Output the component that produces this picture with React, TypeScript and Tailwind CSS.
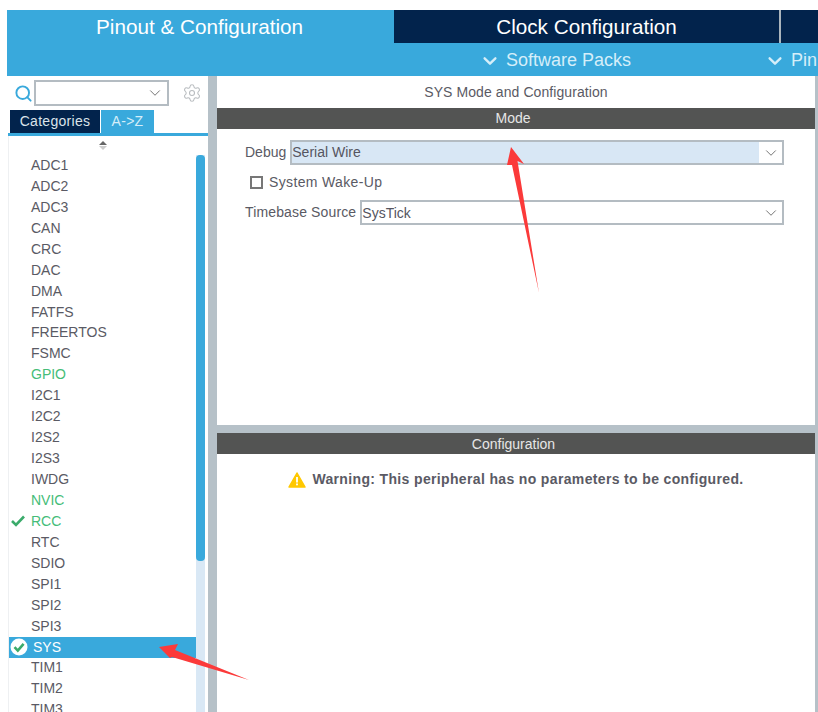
import { ChevronDown, Search, Settings } from "lucide-react";

const peripherals = [
  "ADC1", "ADC2", "ADC3", "CAN", "CRC", "DAC", "DMA", "FATFS", "FREERTOS", "FSMC", "GPIO",
  "I2C1", "I2C2", "I2S2", "I2S3", "IWDG", "NVIC", "RCC", "RTC", "SDIO", "SPI1", "SPI2", "SPI3",
  "SYS", "TIM1", "TIM2",
];

function Select({ value, active }: { value: string; active?: boolean }) {
  return (
    <div className="flex-1 h-[25px] border-2 border-[#b4bcc2] flex items-center bg-white">
      <div className={`flex-1 h-full flex items-center text-[14px] text-[#55555f] ${active ? "bg-[#d8e7f5]" : "pt-px"}`}>
        {value}
      </div>
      <div className="w-[23px] flex justify-center">
        <ChevronDown size={18} strokeWidth={1.2} className="text-[#666]" />
      </div>
    </div>
  );
}

function Row({ name }: { name: string }) {
  if (name === "SYS") {
    return (
      <div className="h-[20.95px] bg-[#39a9dc] flex items-center text-white">
        <svg width="18" height="18" viewBox="0 0 18 18" className="ml-[1px] mr-[5px]">
          <circle cx="9" cy="9" r="8.5" fill="#fff" />
          <path d="M4.5 9.2 L7.8 12.6 L13.6 5.8" fill="none" stroke="#3bab6b" strokeWidth="2.6" />
        </svg>
        {name}
      </div>
    );
  }
  const green = name === "GPIO" || name === "NVIC" || name === "RCC";
  return (
    <div className={`h-[20.95px] flex items-center pl-[22px] relative ${green ? "text-[#45bd78]" : "text-[#5a5a64]"}`}>
      {name === "RCC" && (
        <svg width="14" height="12" viewBox="0 0 14 12" className="absolute left-[2px] top-[4px]">
          <path d="M1 6 L5 10 L13 1.5" fill="none" stroke="#3bab6b" strokeWidth="2.6" />
        </svg>
      )}
      {name}
    </div>
  );
}

export default function App() {
  return (
    <div className="w-[818px] h-[712px] overflow-hidden bg-white flex flex-col pt-[10px] font-['Liberation_Sans',Arial,sans-serif] text-[14px] relative">
      {/* top tabs */}
      <div className="ml-[7px] bg-[#39a9dc] text-white shrink-0">
        <div className="flex h-[33px] text-[20.7px] leading-[33px]">
          <div className="w-[387px] text-center pr-[2px]">Pinout &amp; Configuration</div>
          <div className="w-[385px] bg-[#02234c] text-center">Clock Configuration</div>
          <div className="w-[2px] bg-[#aab4bc]" />
          <div className="flex-1 bg-[#02234c]" />
        </div>
        <div className="flex h-[33px] items-center pt-[2px] text-[18px] text-[#d5eef9] whitespace-nowrap overflow-hidden">
          <div className="ml-[474px] flex items-center gap-[7px]">
            <ChevronDown size={18} strokeWidth={2.6} className="scale-[1.2]" />
            Software Packs
          </div>
          <div className="ml-[135px] flex items-center gap-[7px]">
            <ChevronDown size={18} strokeWidth={2.6} className="scale-[1.2]" />
            Pin
          </div>
        </div>
      </div>

      <div className="flex-1 flex min-h-0">
        {/* left column */}
        <div className="w-[208px] shrink-0 flex flex-col pl-[8px]">
          <div className="h-[34px] flex items-center shrink-0">
            <Search size={19} strokeWidth={2.4} className="text-[#39a9dc] ml-[6px]" />
            <div className="w-[135px] h-[26px] ml-[1px] border-2 border-[#b4bcc2] flex items-center justify-end pr-[3px]">
              <ChevronDown size={18} strokeWidth={1.2} className="text-[#666]" />
            </div>
            <Settings size={20} strokeWidth={1.3} className="text-[#b9bdc0] ml-[13px]" />
          </div>
          <div className="flex pl-[2px] h-[23px] shrink-0 text-[14px] tracking-[0.3px]">
            <div className="w-[90px] bg-[#02234c] text-[#dbe4ea] flex items-center justify-center">Categories</div>
            <div className="w-[53px] ml-px bg-[#39a9dc] text-[#d5eef9] flex items-center justify-center">A-&gt;Z</div>
          </div>
          <div className="h-[3px] bg-[#39a9dc] shrink-0" />
          <div className="flex-1 flex min-h-0 border-l border-[#eef0f2]">
            <div className="flex-1 min-w-0 overflow-hidden">
              <div className="h-[19px] flex justify-center flex-col items-center gap-[1px]">
                <div className="w-0 h-0 border-x-[4px] border-x-transparent border-b-[4px] border-b-[#666]" />
                <div className="w-0 h-0 border-x-[4px] border-x-transparent border-t-[4px] border-t-[#ccc]" />
              </div>
              {peripherals.map((p) => (
                <Row key={p} name={p} />
              ))}
              <div className="h-[13px] overflow-hidden pl-[22px] text-[#5a5a64] leading-[21px]">TIM3</div>
            </div>
            <div className="w-[9px] bg-[#d9e8f5] mt-[19px]">
              <div className="h-[406px] bg-[#39a9dc] rounded-[4px]" />
            </div>
            <div className="w-[3px]" />
          </div>
        </div>

        {/* main panel */}
        <div className="flex-1 flex flex-col bg-[#b6c1c8] pl-[9px] pr-[3px] min-w-0">
          <div className="h-[349px] bg-white flex flex-col shrink-0">
            <div className="h-[31px] flex items-center justify-center pt-px tracking-[0.08px] text-[#5a5a64]">SYS Mode and Configuration</div>
            <div className="h-[21px] mt-[1px] bg-[#535453] text-[#e6e6e6] flex items-center justify-center pr-[6px]">Mode</div>
            <div className="pl-[28px] pr-[31px] pt-[11px] text-[#5a5a64]">
              <div className="flex items-center gap-[4px]">
                Debug
                <Select value="Serial Wire" active />
              </div>
              <label className="flex items-center gap-[6px] h-[35px] pl-[5px] tracking-[0.35px]">
                <span className="w-[13px] h-[13px] border-2 border-[#777]" />
                System Wake-Up
              </label>
              <div className="flex items-center gap-[4px]">
                <span className="tracking-[0.14px]">Timebase Source</span>
                <Select value="SysTick" />
              </div>
            </div>
          </div>
          <div className="flex-1 mt-[8px] bg-white flex flex-col min-h-0">
            <div className="h-[21px] bg-[#535453] text-[#e6e6e6] flex items-center justify-center pr-[5px] pt-px">Configuration</div>
            <div className="h-[51px] flex items-center justify-center gap-[6px] font-bold text-[#5a5a64] tracking-[0.35px]">
              <svg width="18" height="16" viewBox="0 0 18 16">
                <path d="M9 1 L17 15 L1 15 Z" fill="#ffc800" stroke="#ffc800" strokeWidth="1.5" strokeLinejoin="round" />
                <rect x="8.1" y="5" width="1.8" height="5.5" fill="#fff" />
                <rect x="8.1" y="11.5" width="1.8" height="1.8" fill="#fff" />
              </svg>
              Warning: This peripheral has no parameters to be configured.
            </div>
          </div>
        </div>
      </div>

      {/* red annotation arrows */}
      <svg width="818" height="712" viewBox="0 0 818 712" className="absolute left-0 top-0 pointer-events-none">
        <path d="M511 147 L524 164 L517.5 161 L539 293 L512 165 L507 165 Z" fill="#fb3a3a" />
        <path d="M159 647 L178 644 L175 650 L249 680 L172 657 L170 658 Z" fill="#fb3a3a" />
      </svg>
    </div>
  );
}
